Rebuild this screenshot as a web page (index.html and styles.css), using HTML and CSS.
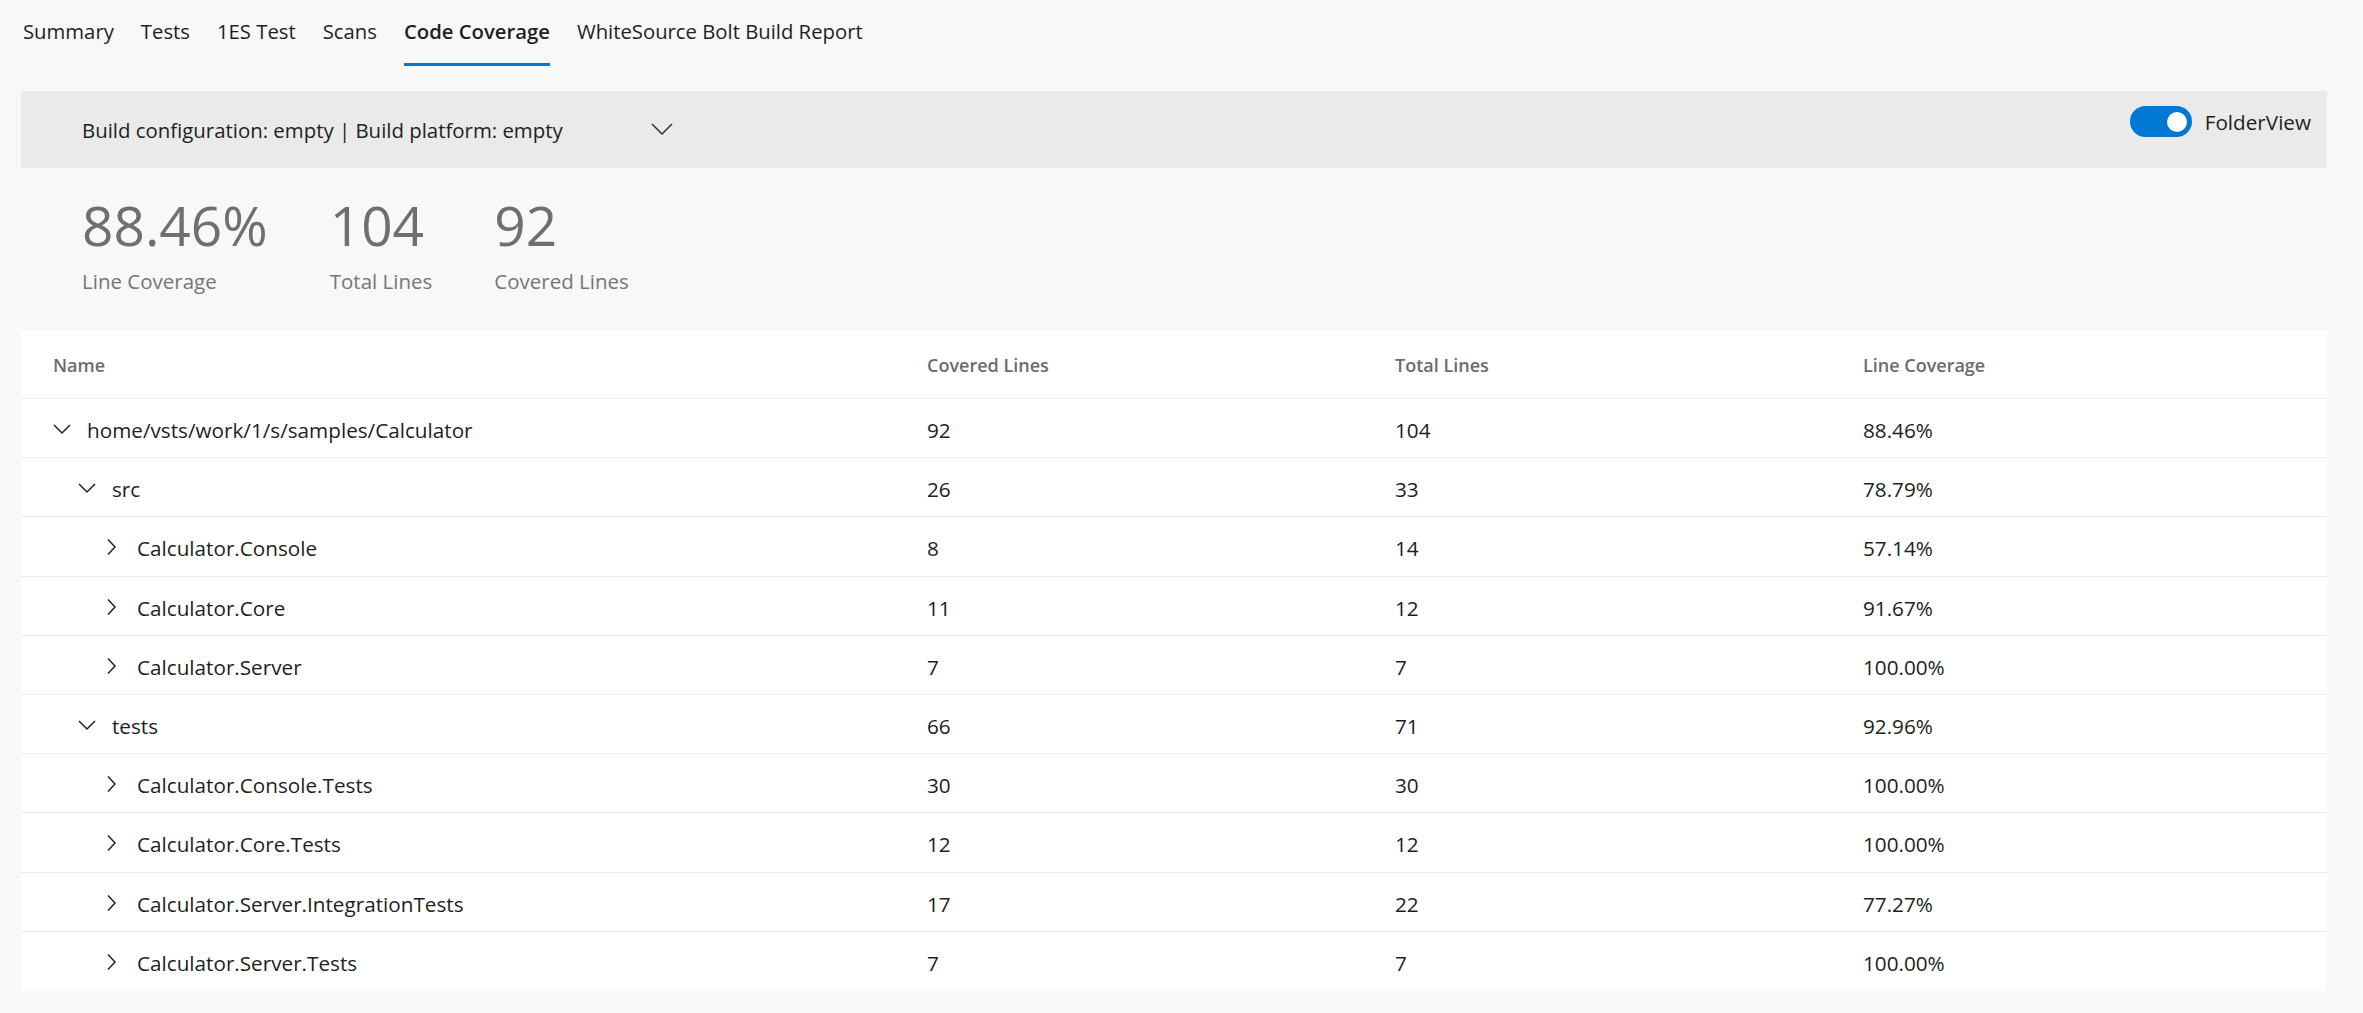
FILE: index.html
```html
<!DOCTYPE html>
<html lang="en">
<head>
<meta charset="utf-8">
<title>Code Coverage</title>
<link rel="stylesheet" href="styles.css">
</head>
<body>
<nav class="tabs">
  <div class="tab">Summary</div>
  <div class="tab">Tests</div>
  <div class="tab">1ES Test</div>
  <div class="tab">Scans</div>
  <div class="tab tab-active">Code Coverage</div>
  <div class="tab">WhiteSource Bolt Build Report</div>
</nav>

<main class="content">
  <div class="filter-bar">
    <div class="dropdown">
      <span class="dropdown-text">Build configuration: empty | Build platform: empty</span>
      <svg class="dropdown-chevron" width="22" height="12" viewBox="0 0 22 12"><polyline points="1,1 11,11 21,1" fill="none" stroke="#333" stroke-width="1.5"/></svg>
    </div>
    <div class="folder-toggle">
      <div class="toggle"><span class="knob"></span></div>
      <span class="toggle-label">FolderView</span>
    </div>
  </div>

  <div class="stats">
    <div class="stat">
      <div class="stat-value">88.46%</div>
      <div class="stat-label">Line Coverage</div>
    </div>
    <div class="stat">
      <div class="stat-value">104</div>
      <div class="stat-label">Total Lines</div>
    </div>
    <div class="stat">
      <div class="stat-value">92</div>
      <div class="stat-label">Covered Lines</div>
    </div>
  </div>

  <div class="card">
    <div class="row head">
      <div class="cell">Name</div>
      <div class="cell">Covered Lines</div>
      <div class="cell">Total Lines</div>
      <div class="cell">Line Coverage</div>
    </div>

    <div class="row">
      <div class="cell name lvl0"><svg class="chev" width="18" height="18" viewBox="0 0 18 18"><polyline points="1,5 9,13 17,5" fill="none" stroke="#222" stroke-width="1.5"/></svg>home/vsts/work/1/s/samples/Calculator</div>
      <div class="cell">92</div><div class="cell">104</div><div class="cell">88.46%</div>
    </div>
    <div class="row">
      <div class="cell name lvl1"><svg class="chev" width="18" height="18" viewBox="0 0 18 18"><polyline points="1,5 9,13 17,5" fill="none" stroke="#222" stroke-width="1.5"/></svg>src</div>
      <div class="cell">26</div><div class="cell">33</div><div class="cell">78.79%</div>
    </div>
    <div class="row">
      <div class="cell name lvl2"><svg class="chev" width="18" height="18" viewBox="0 0 18 18"><polyline points="5,1.5 12,9 5,16.5" fill="none" stroke="#222" stroke-width="1.5"/></svg>Calculator.Console</div>
      <div class="cell">8</div><div class="cell">14</div><div class="cell">57.14%</div>
    </div>
    <div class="row">
      <div class="cell name lvl2"><svg class="chev" width="18" height="18" viewBox="0 0 18 18"><polyline points="5,1.5 12,9 5,16.5" fill="none" stroke="#222" stroke-width="1.5"/></svg>Calculator.Core</div>
      <div class="cell">11</div><div class="cell">12</div><div class="cell">91.67%</div>
    </div>
    <div class="row">
      <div class="cell name lvl2"><svg class="chev" width="18" height="18" viewBox="0 0 18 18"><polyline points="5,1.5 12,9 5,16.5" fill="none" stroke="#222" stroke-width="1.5"/></svg>Calculator.Server</div>
      <div class="cell">7</div><div class="cell">7</div><div class="cell">100.00%</div>
    </div>
    <div class="row">
      <div class="cell name lvl1"><svg class="chev" width="18" height="18" viewBox="0 0 18 18"><polyline points="1,5 9,13 17,5" fill="none" stroke="#222" stroke-width="1.5"/></svg>tests</div>
      <div class="cell">66</div><div class="cell">71</div><div class="cell">92.96%</div>
    </div>
    <div class="row">
      <div class="cell name lvl2"><svg class="chev" width="18" height="18" viewBox="0 0 18 18"><polyline points="5,1.5 12,9 5,16.5" fill="none" stroke="#222" stroke-width="1.5"/></svg>Calculator.Console.Tests</div>
      <div class="cell">30</div><div class="cell">30</div><div class="cell">100.00%</div>
    </div>
    <div class="row">
      <div class="cell name lvl2"><svg class="chev" width="18" height="18" viewBox="0 0 18 18"><polyline points="5,1.5 12,9 5,16.5" fill="none" stroke="#222" stroke-width="1.5"/></svg>Calculator.Core.Tests</div>
      <div class="cell">12</div><div class="cell">12</div><div class="cell">100.00%</div>
    </div>
    <div class="row">
      <div class="cell name lvl2"><svg class="chev" width="18" height="18" viewBox="0 0 18 18"><polyline points="5,1.5 12,9 5,16.5" fill="none" stroke="#222" stroke-width="1.5"/></svg>Calculator.Server.IntegrationTests</div>
      <div class="cell">17</div><div class="cell">22</div><div class="cell">77.27%</div>
    </div>
    <div class="row last">
      <div class="cell name lvl2"><svg class="chev" width="18" height="18" viewBox="0 0 18 18"><polyline points="5,1.5 12,9 5,16.5" fill="none" stroke="#222" stroke-width="1.5"/></svg>Calculator.Server.Tests</div>
      <div class="cell">7</div><div class="cell">7</div><div class="cell">100.00%</div>
    </div>
  </div>
</main>
</body>
</html>
```

FILE: styles.css
```css
* { box-sizing: border-box; }

html, body {
  margin: 0;
  padding: 0;
}

body {
  background: #f8f8f8;
  font-family: "Open Sans", "Noto Sans", sans-serif;
  color: #201f1e;
  font-size: 20.7px;
}

.tabs {
  display: flex;
  gap: 27px;
  padding-left: 23px;
  height: 66px;
}

.tab {
  padding-top: 17px;
  line-height: 28px;
  height: 66px;
  font-size: 20.3px;
  color: #201f1e;
  border-bottom: 3px solid transparent;
}

.tab-active {
  font-weight: 600;
  border-bottom-color: #0078d4;
}

.content {
  margin: 25px 36px 0 21px;
}

.filter-bar {
  display: flex;
  justify-content: space-between;
  align-items: center;
  height: 77px;
  background: #eaeaea;
  padding-left: 61px;
  padding-right: 16px;
}

.dropdown {
  display: flex;
  align-items: center;
}

.dropdown-text {
  font-size: 20.4px;
  color: #201f1e;
}

.dropdown-chevron {
  margin-left: 88px;
  margin-top: -2px;
}

.folder-toggle {
  display: flex;
  align-items: center;
  align-self: flex-start;
  margin-top: 15px;
  gap: 13px;
}

.toggle {
  width: 62px;
  height: 31px;
  border-radius: 16px;
  background: #0078d4;
  display: flex;
  align-items: center;
  justify-content: flex-end;
  padding-right: 5px;
}

.knob {
  width: 20px;
  height: 20px;
  border-radius: 50%;
  background: #fff;
}

.toggle-label {
  font-size: 20.7px;
  color: #201f1e;
}

.stats {
  display: flex;
  gap: 62px;
  padding: 25px 0 36px 61px;
}

.stat-value {
  font-size: 55px;
  line-height: 64px;
  color: #6f6f6f;
}

.stat-label {
  margin-top: 10px;
  font-size: 20.5px;
  line-height: 28px;
  color: #767676;
}

.card {
  background: #fff;
}

.row {
  display: grid;
  grid-template-columns: 874px 468px 468px 1fr;
  padding-left: 32px;
  padding-top: 4px;
  height: 59.2px;
  align-items: center;
  border-bottom: 1px solid #ebebeb;
  font-size: 20.7px;
  color: #201f1e;
}

.row.head {
  height: 68px;
  padding-top: 1px;
  font-size: 18px;
  font-weight: 600;
  color: #6b6b6b;
}

.row.last {
  border-bottom: none;
}

.cell.name {
  display: flex;
  align-items: center;
}

.chev {
  flex: none;
  margin-right: 16px;
  margin-top: -2px;
}

.lvl1 { padding-left: 25px; }
.lvl2 { padding-left: 50px; }
```
